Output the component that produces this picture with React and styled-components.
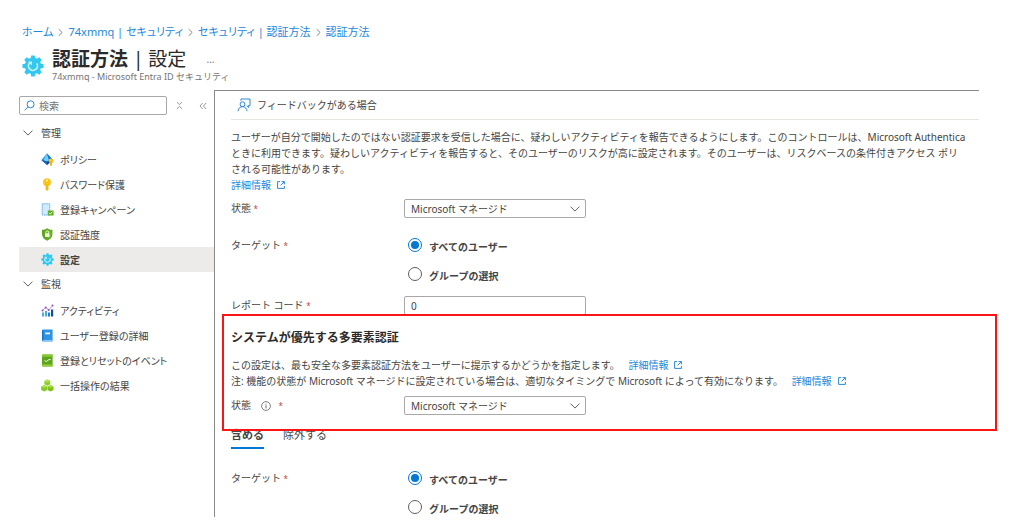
import { useId, useState } from "react";
import styled, { createGlobalStyle } from "styled-components";

const colors = {
    text: "#454443",
    title: "#2b2a29",
    muted: "#757473",
    link: "#2388dc",
    primary: "#0078d4",
    border: "#a9a8a6",
    line: "#e6e5df",
    selected: "#edebe9",
    required: "#c4443e",
    mark: "#fa1414",
};

const manageItems = [
    { label: "ポリシー", icon: PolicyIcon },
    { label: "パスワード保護", icon: KeyIcon },
    { label: "登録キャンペーン", icon: CampaignIcon },
    { label: "認証強度", icon: ShieldIcon },
    { label: "設定", icon: GearIcon },
];

const monitorItems = [
    { label: "アクティビティ", icon: ActivityIcon },
    { label: "ユーザー登録の詳細", icon: BlueBookIcon },
    { label: "登録とリセットのイベント", icon: GreenBookIcon },
    { label: "一括操作の結果", icon: CubesIcon },
];

export default function App() {
    const [selected, setSelected] = useState("設定");
    const [tab, setTab] = useState("include");

    return (
        <PageStl>
            <GlobalStl />
            <BreadcrumbStl aria-label="階層リンク">
                <a href="#home">ホーム</a>
                <CrumbArrow />
                <a href="#tenant">74xmmq | セキュリティ</a>
                <CrumbArrow />
                <a href="#security">セキュリティ | 認証方法</a>
                <CrumbArrow />
                <a href="#methods">認証方法</a>
            </BreadcrumbStl>
            <HeaderStl>
                <GearIcon size={22} />
                <div>
                    <TitleRowStl>
                        <TitleStl>
                            認証方法 <span>| 設定</span>
                        </TitleStl>
                        <MoreButtonStl type="button">…</MoreButtonStl>
                    </TitleRowStl>
                    <SubtitleStl>
                        74xmmq - Microsoft Entra ID セキュリティ
                    </SubtitleStl>
                </div>
            </HeaderStl>
            <BodyStl>
                <SidebarStl>
                    <SearchRowStl>
                        <SearchBoxStl>
                            <SearchIcon />
                            <input
                                type="search"
                                placeholder="検索"
                                aria-label="検索"
                            />
                        </SearchBoxStl>
                        <SearchToolsStl>
                            <IconButtonStl type="button" aria-label="並べ替え">
                                <CollapseIcon />
                            </IconButtonStl>
                            <IconButtonStl
                                type="button"
                                aria-label="折りたたむ"
                            >
                                <DoubleLeftIcon />
                            </IconButtonStl>
                        </SearchToolsStl>
                    </SearchRowStl>
                    <NavGroup
                        title="管理"
                        items={manageItems}
                        selected={selected}
                        onSelect={setSelected}
                    />
                    <NavGroup
                        title="監視"
                        items={monitorItems}
                        selected={selected}
                        onSelect={setSelected}
                    />
                </SidebarStl>
                <MainStl>
                    <CommandBarStl>
                        <CommandButtonStl type="button">
                            <FeedbackIcon />
                            フィードバックがある場合
                        </CommandButtonStl>
                    </CommandBarStl>
                    <DescriptionStl>
                        ユーザーが自分で開始したのではない認証要求を受信した場合に、疑わしいアクティビティを報告できるようにします。このコントロールは、Microsoft
                        Authentica
                        <br />
                        ときに利用できます。疑わしいアクティビティを報告すると、そのユーザーのリスクが高に設定されます。そのユーザーは、リスクベースの条件付きアクセス
                        ポリ
                        <br />
                        される可能性があります。
                        <br />
                        <MoreLink />
                    </DescriptionStl>
                    <StateField $space={6} />
                    <TargetField $space={17} name="report-target" />
                    <FieldStl $space={12}>
                        <label htmlFor="report-code">
                            レポート コード <RequiredStl>*</RequiredStl>
                        </label>
                        <TextInputStl id="report-code" defaultValue="0" />
                    </FieldStl>
                    <MarkedSectionStl>
                        <SectionTitleStl>
                            システムが優先する多要素認証
                        </SectionTitleStl>
                        <DescriptionStl>
                            この設定は、最も安全な多要素認証方法をユーザーに提示するかどうかを指定します。{" "}
                            <MoreLink />
                            <br />
                            注: 機能の状態が Microsoft
                            マネージドに設定されている場合は、適切なタイミングで
                            Microsoft によって有効になります。 <MoreLink />
                        </DescriptionStl>
                        <StateField $space={7} info />
                    </MarkedSectionStl>
                    <TabsStl role="tablist">
                        <TabStl
                            type="button"
                            role="tab"
                            aria-selected={tab === "include"}
                            $active={tab === "include"}
                            onClick={() => setTab("include")}
                        >
                            含める
                        </TabStl>
                        <TabStl
                            type="button"
                            role="tab"
                            aria-selected={tab === "exclude"}
                            $active={tab === "exclude"}
                            onClick={() => setTab("exclude")}
                        >
                            除外する
                        </TabStl>
                    </TabsStl>
                    <TargetField $space={19} name="mfa-target" />
                </MainStl>
            </BodyStl>
        </PageStl>
    );
}

function NavGroup({ title, items, selected, onSelect }) {
    const [open, setOpen] = useState(true);
    return (
        <section>
            <GroupButtonStl
                type="button"
                aria-expanded={open}
                onClick={() => setOpen(!open)}
            >
                <ChevronDown />
                {title}
            </GroupButtonStl>
            {open && (
                <NavListStl>
                    {items.map(({ label, icon: Icon }) => (
                        <li key={label}>
                            <NavLinkStl
                                href="#menu"
                                $active={label === selected}
                                onClick={() => onSelect(label)}
                            >
                                <Icon size={13} />
                                {label}
                            </NavLinkStl>
                        </li>
                    ))}
                </NavListStl>
            )}
        </section>
    );
}

function StateField({ $space, info }) {
    const id = useId();
    return (
        <FieldStl $space={$space}>
            <label htmlFor={id}>
                状態 {info && <InfoIcon />}
                <RequiredStl>*</RequiredStl>
            </label>
            <SelectBoxStl>
                <select id={id}>
                    <option>Microsoft マネージド</option>
                    <option>有効</option>
                    <option>無効</option>
                </select>
                <ChevronDown />
            </SelectBoxStl>
        </FieldStl>
    );
}

function TargetField({ $space, name }) {
    return (
        <FieldStl $space={$space} role="radiogroup" aria-labelledby={name}>
            <FieldLabelStl id={name}>
                ターゲット <RequiredStl>*</RequiredStl>
            </FieldLabelStl>
            <RadioListStl>
                <RadioLabelStl>
                    <input type="radio" name={name} defaultChecked />
                    <span>すべてのユーザー</span>
                </RadioLabelStl>
                <RadioLabelStl>
                    <input type="radio" name={name} />
                    <span>グループの選択</span>
                </RadioLabelStl>
            </RadioListStl>
        </FieldStl>
    );
}

function MoreLink() {
    return (
        <MoreLinkStl href="#learn-more">
            詳細情報
            <ExternalIcon />
        </MoreLinkStl>
    );
}

/* icons */

function CrumbArrow() {
    return (
        <svg width="5" height="9" viewBox="0 0 5 9" fill="none">
            <path d="M.7 1.2 4.2 4.5.7 7.8" stroke="#8a8988" />
        </svg>
    );
}

function ChevronDown() {
    return (
        <svg width="10" height="6" viewBox="0 0 10 6" fill="none">
            <path d="M.5.6 5 5.1 9.5.6" stroke="#605e5c" />
        </svg>
    );
}

function SearchIcon() {
    return (
        <svg width="11" height="11" viewBox="0 0 11 11" fill="none">
            <circle cx="6.6" cy="4.3" r="3.5" stroke="#2b88d8" />
            <path d="M4.1 6.8.5 10.4" stroke="#2b88d8" />
        </svg>
    );
}

function CollapseIcon() {
    return (
        <svg width="7" height="9" viewBox="0 0 7 9" fill="none" stroke="#9a9998">
            <path d="M1 1.2 3.5 3.6 6 1.2M1 7.8 3.5 5.4 6 7.8" />
        </svg>
    );
}

function DoubleLeftIcon() {
    return (
        <svg width="8" height="8" viewBox="0 0 8 8" fill="none" stroke="#9a9998">
            <path d="M3.6 1 1 4l2.600 3M7 1 4.400 4 7 7" />
        </svg>
    );
}

function ExternalIcon() {
    return (
        <svg width="8" height="8" viewBox="0 0 8 8" fill="none" stroke="#2b88d8">
            <path d="M3 .6H.6v6.800h6.800V5M4.600.6h2.800v2.800M7.200.8 3.600 4.400" />
        </svg>
    );
}

function InfoIcon() {
    return (
        <InfoIconStl viewBox="0 0 10 10" fill="none" stroke="#605e5c">
            <circle cx="5" cy="5" r="4.4" strokeWidth=".8" />
            <path d="M5 4.300v3.200M5 2.500v1" strokeWidth=".9" />
        </InfoIconStl>
    );
}

function FeedbackIcon() {
    return (
        <svg
            width="14"
            height="14"
            viewBox="0 0 14 14"
            fill="none"
            stroke="#2b88d8"
        >
            <path d="M4 2.800V1h9v6.500h-1.400v2L9.700 7.600" />
            <circle cx="5.500" cy="6.200" r="2.400" />
            <path d="M1 13.200c.3-2.900 2-4.500 4.500-4.500s4.200 1.600 4.500 4.500" />
        </svg>
    );
}

function GearIcon({ size }) {
    const teeth = [0, 45, 90, 135, 180, 225, 270, 315];
    return (
        <svg width={size} height={size} viewBox="0 0 22 22">
            {teeth.map((angle) => (
                <path
                    key={angle}
                    d="M9.300.4h3.400l1 4.600H8.300z"
                    fill="#32c8f0"
                    transform={`rotate(${angle} 11 11)`}
                />
            ))}
            <circle cx="11" cy="11" r="8.200" fill="#32c8f0" />
            <path
                d="M7.700 7.800a4.500 4.500 0 1 0 7 .6"
                fill="none"
                stroke="#c9f3fd"
                strokeWidth="1.700"
            />
            <path d="M6 6.500h4v3.900z" fill="#c9f3fd" />
        </svg>
    );
}

function PolicyIcon({ size }) {
    return (
        <svg width={size} height={size} viewBox="0 0 13 13">
            <path d="M6 .5 12 7 6 12 .3 7z" fill="#2f9be8" />
            <path d="M6 .5 8.200 7.500 6 8.600 2.500 7.300z" fill="#6fd0f5" />
            <path d="M6 .5 12 7 8.200 7.500z" fill="#1572c4" />
            <path d="M.3 7 2.500 7.300 6 8.600V12z" fill="#1e63b4" />
            <path d="M6 8.600 8.200 7.500 9 9.500 6 12z" fill="#174a8f" />
            <circle cx="10" cy="7.800" r="2.400" fill="#f9b916" />
            <path d="M9.100 9.500h1.800v2.700l-.9.700-.9-.7z" fill="#f0a80e" />
            <circle cx="10" cy="7" r=".6" fill="#fff4c8" />
        </svg>
    );
}

function KeyIcon({ size }) {
    return (
        <svg width={size} height={size} viewBox="0 0 13 13">
            <circle cx="6" cy="4.200" r="3.900" fill="#fcc419" />
            <path d="M4.600 6.500h2.800v5L6 12.900l-1.400-1.400z" fill="#f9b80f" />
            <circle cx="6" cy="2.600" r="1" fill="#fff3c4" />
        </svg>
    );
}

function CampaignIcon({ size }) {
    return (
        <svg width={size} height={size} viewBox="0 0 13 13">
            <rect
                x="1.2"
                y=".8"
                width="7.6"
                height="11.2"
                fill="#d3eafb"
                stroke="#5fafe9"
                strokeDasharray="1.500 .6"
            />
            <rect x="6.8" y="7.5" width="5.8" height="5" fill="#5fae27" />
            <path
                d="m8 9.900 1.200 1.200 2.200-2.400"
                fill="none"
                stroke="#efffdc"
                strokeWidth=".9"
            />
        </svg>
    );
}

function ShieldIcon({ size }) {
    return (
        <svg width={size} height={size} viewBox="0 0 13 13">
            <path
                d="M6.200.3C7.800 1.400 9.500 1.700 11.400 1.800v4.500c0 3-2.300 5.200-5.200 6.500C3.300 11.500 1 9.300 1 6.300V1.800C2.900 1.700 4.600 1.400 6.200.3z"
                fill="#5ea51d"
            />
            <path
                d="M6.200 1.500c1.300.8 2.600 1.100 4.200 1.200v3.600c0 2.400-1.800 4.200-4.200 5.400z"
                fill="#6fb526"
            />
            <rect x="4" y="5.2" width="4.5" height="3.8" rx=".5" fill="#f2ffe3" />
            <path
                d="M4.900 5.400V4.200a1.300 1.300 0 0 1 2.700 0v1.200"
                fill="none"
                stroke="#f2ffe3"
                strokeWidth=".9"
            />
        </svg>
    );
}

function ActivityIcon({ size }) {
    return (
        <svg width={size} height={size} viewBox="0 0 13 13">
            <path d="M1 8.500h2v4H1zM4 7h2v5.500H4z" fill="#4aa9e8" />
            <path d="M7 8.500h2v4H7z" fill="#1f7bcb" />
            <path d="M10 5.500h2.200v7H10z" fill="#124f94" />
            <path
                d="m1.500 6.500 3.200-3 3 2.500 4-4.500"
                fill="none"
                stroke="#a175dd"
                strokeWidth=".8"
            />
            <g fill="#8a50d2">
                <circle cx="1.5" cy="6.5" r="1" />
                <circle cx="4.7" cy="3.5" r="1" />
                <circle cx="7.7" cy="6" r="1" />
                <circle cx="11.5" cy="1.5" r="1" />
            </g>
        </svg>
    );
}

function BlueBookIcon({ size }) {
    return (
        <svg width={size} height={size} viewBox="0 0 13 13">
            <path d="M2 .5h9.600v12H2a1 1 0 0 1-1-1v-10a1 1 0 0 1 1-1z" fill="#2f93e3" />
            <path d="M2.200 11h8.800v.8H2.200z" fill="#a9d5f8" />
            <path d="M1 1.500h1.400v9.300H1z" fill="#1d72c2" />
            <path d="M4.200 3.500h4.800v1.800H4.200z" fill="#e7f5ff" />
        </svg>
    );
}

function GreenBookIcon({ size }) {
    return (
        <svg width={size} height={size} viewBox="0 0 13 13">
            <path d="M2 .5h9.600v12H2a1 1 0 0 1-1-1v-10a1 1 0 0 1 1-1z" fill="#5ea51d" />
            <path d="M2 .5h9.600v2.200H1V1.500a1 1 0 0 1 1-1z" fill="#86cc35" />
            <path d="M1 10.600h10.600v1.900H2a1 1 0 0 1-1-1z" fill="#8fd03c" />
            <path
                d="m3.600 6.600 2 1 1.600-1.700 2.400-.4"
                fill="none"
                stroke="#f2ffe3"
            />
        </svg>
    );
}

function CubesIcon({ size }) {
    return (
        <svg width={size} height={size} viewBox="0 0 13 13">
            <path d="M6.300.6 9.200 2v3.300L6.300 6.700 3.400 5.300V2z" fill="#8bcf28" />
            <path d="M6.300.6 9.200 2 6.300 3.400 3.400 2z" fill="#b0e64a" />
            <path d="M3.200 6 6.200 7.400v3.500l-3 1.500-3-1.500V7.400z" fill="#86c926" />
            <path d="m3.200 6 3 1.400-3 1.400-3-1.400z" fill="#b0e64a" />
            <path d="m9.500 6 3 1.400v3.500l-3 1.500-3-1.500V7.400z" fill="#7dc01f" />
            <path d="m9.500 6 3 1.400-3 1.400-3-1.400z" fill="#a9e041" />
        </svg>
    );
}

/* styles */

const GlobalStl = createGlobalStyle`
    * {
        box-sizing: border-box;
    }
    body {
        margin: 0;
        background: #fff;
    }
    body, button, input, select {
        font-family: "Noto Sans", "Noto Sans CJK JP", sans-serif;
        font-size: 10px;
        line-height: 16px;
        color: ${colors.text};
    }
    h1, h2, p, ul {
        margin: 0;
        padding: 0;
    }
    button {
        padding: 0;
        border: 0;
        background: none;
        cursor: pointer;
    }
    a {
        color: ${colors.link};
        text-decoration: none;
    }
    svg {
        flex-shrink: 0;
    }
`;

const PageStl = styled.div`
    padding: 24px 45px 2px 19px;
`;

const BreadcrumbStl = styled.nav`
    display: flex;
    align-items: center;
    gap: 5px;
    padding-left: 3px;
    font-size: 11px;
    font-feature-settings: "palt";
    white-space: nowrap;
`;

const HeaderStl = styled.header`
    display: flex;
    align-items: center;
    gap: 8px;
    padding: 8px 0 0 3px;
`;

const TitleRowStl = styled.div`
    display: flex;
    align-items: center;
    gap: 20px;
`;

const TitleStl = styled.h1`
    font-size: 19px;
    line-height: 22px;
    font-weight: 700;
    color: ${colors.title};
    span {
        font-weight: 400;
    }
`;

const MoreButtonStl = styled.button`
    color: ${colors.muted};
`;

const SubtitleStl = styled.p`
    font-size: 9px;
    line-height: 14px;
    color: ${colors.muted};
`;

const BodyStl = styled.div`
    display: flex;
    align-items: stretch;
    padding-top: 6px;
`;

const SidebarStl = styled.aside`
    width: 195px;
    flex-shrink: 0;
    padding-top: 6px;
`;

const SearchRowStl = styled.div`
    display: flex;
    align-items: center;
    gap: 9px;
    margin-bottom: 6px;
`;

const SearchToolsStl = styled.div`
    display: flex;
    gap: 16px;
`;

const SearchBoxStl = styled.div`
    display: flex;
    align-items: center;
    gap: 4px;
    width: 148px;
    height: 19px;
    padding-left: 4px;
    border: 1px solid ${colors.border};
    border-radius: 2px;
    input {
        width: 100%;
        padding: 0;
        border: 0;
        outline: 0;
        background: none;
    }
    input::placeholder {
        color: ${colors.muted};
        opacity: 1;
    }
`;

const IconButtonStl = styled.button`
    display: flex;
    align-items: center;
`;

const GroupButtonStl = styled.button`
    display: flex;
    align-items: center;
    gap: 8px;
    width: 100%;
    height: 26px;
    padding: 0 0 2px 4px;
`;

const NavListStl = styled.ul`
    list-style: none;
`;

const NavLinkStl = styled.a`
    display: flex;
    align-items: center;
    gap: 6px;
    height: 25px;
    padding-left: 22px;
    color: ${colors.text};
    background: ${(props) => (props.$active ? colors.selected : "none")};
    font-weight: ${(props) => (props.$active ? 700 : 400)};
    font-feature-settings: "palt";
    white-space: nowrap;
`;

const MainStl = styled.main`
    flex: 1;
    min-width: 0;
    padding-left: 16px;
    border-top: 1px solid #8a8988;
    border-left: 1px solid #8a8988;
`;

const CommandBarStl = styled.div`
    height: 29px;
    padding: 0 6px;
    border-bottom: 1px solid ${colors.line};
    display: flex;
    align-items: center;
`;

const CommandButtonStl = styled.button`
    display: flex;
    align-items: center;
    gap: 6px;
`;

const DescriptionStl = styled.p`
    padding-top: 9px;
    white-space: nowrap;
    overflow: hidden;
`;

const MoreLinkStl = styled.a`
    display: inline-flex;
    align-items: center;
    gap: 6px;
    vertical-align: top;
`;

const FieldStl = styled.div`
    display: grid;
    grid-template-columns: 173px 182px;
    margin-top: ${(props) => props.$space}px;
    line-height: 19px;
`;

const FieldLabelStl = styled.span`
    line-height: 20px;
`;

const RequiredStl = styled.span`
    font-size: 8px;
    color: ${colors.required};
`;

const InfoIconStl = styled.svg`
    width: 10px;
    height: 10px;
    margin: 0 8px 0 7px;
    vertical-align: -2px;
`;

const SelectBoxStl = styled.div`
    position: relative;
    height: 19px;
    select {
        appearance: none;
        display: block;
        width: 100%;
        height: 100%;
        padding: 0 24px 0 6px;
        border: 1px solid ${colors.border};
        border-radius: 2px;
        background: #fff;
    }
    svg {
        position: absolute;
        right: 6px;
        top: 7px;
        pointer-events: none;
    }
`;

const TextInputStl = styled.input`
    height: 19px;
    padding: 0 6px;
    border: 1px solid ${colors.border};
    border-radius: 2px;
`;

const RadioListStl = styled.div`
    display: flex;
    flex-direction: column;
    gap: 9px;
    padding-left: 4px;
`;

const RadioLabelStl = styled.label`
    display: flex;
    align-items: center;
    gap: 7px;
    height: 20px;
    font-weight: 700;
    span {
        padding-top: 4px;
        line-height: 16px;
    }
    input {
        appearance: none;
        width: 14px;
        height: 14px;
        margin: 0;
        padding: 2px;
        border: 1px solid #605e5c;
        border-radius: 50%;
    }
    input:checked {
        border-color: ${colors.primary};
        background: ${colors.primary} content-box;
    }
`;

const MarkedSectionStl = styled.section`
    position: relative;
    margin: -1px -18px 0 -9px;
    padding: 14px 7px;
    border: 2px solid ${colors.mark};
    ${DescriptionStl} {
        padding-top: 11px;
    }
    ${MoreLinkStl} {
        margin-left: 6px;
    }
`;

const SectionTitleStl = styled.h2`
    font-size: 12px;
    line-height: 16px;
    font-weight: 700;
    color: ${colors.title};
`;

const TabsStl = styled.div`
    display: flex;
    gap: 19px;
    margin-top: -2px;
`;

const TabStl = styled.button`
    height: 20px;
    padding-bottom: 6px;
    font-size: 11px;
    line-height: 12px;
    font-weight: ${(props) => (props.$active ? 700 : 400)};
    border-bottom: 2px solid
        ${(props) => (props.$active ? colors.primary : "transparent")};
`;
